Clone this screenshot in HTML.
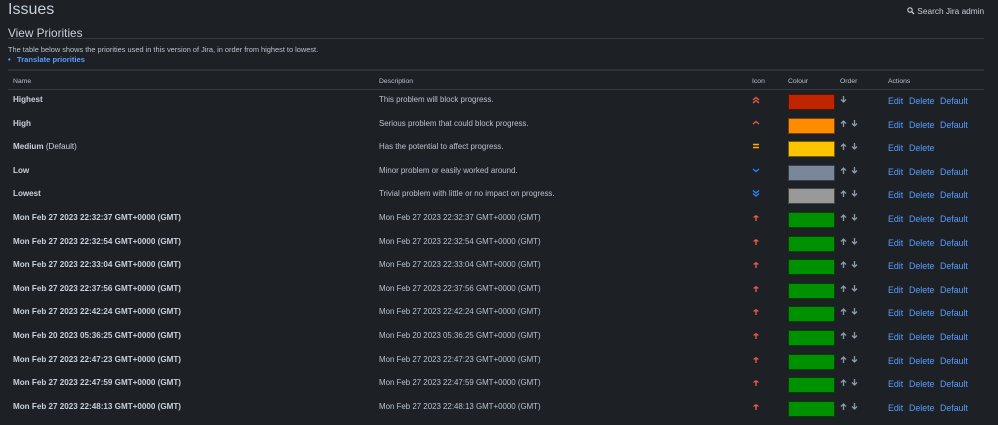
<!DOCTYPE html><html><head><style>
body{margin:0;width:998px;height:408px;overflow:hidden;background:#1d2125;font-family:"Liberation Sans",sans-serif;color:#b6c2cf;position:relative}
.a{position:absolute;white-space:nowrap}
.r{position:absolute;left:0;width:998px;height:23.6px;font-size:8px}
.r .n{position:absolute;left:13px;top:0;font-weight:bold;color:#c7d1db;font-size:8.1px}
.r .d{position:absolute;left:379px;top:0;font-size:7.9px}
.r .sw{position:absolute;left:788px;top:-1px;width:45px;height:14px;border:1px solid #0008}
.r svg{position:absolute}
.r .ac{position:absolute;left:888px;top:1px;color:#579dff;font-size:8.8px}
.r .ac span{position:absolute}
.line{position:absolute;left:8px;width:976px;height:1px;background:#333a41}
</style></head><body>
<svg width="0" height="0" style="position:absolute"><defs>
<g id="up"><path d="M3.5 7V1M1 3.5L3.5 1L6 3.5" stroke="#8c9bab" stroke-width="1.3" fill="none"/></g>
<g id="dn"><path d="M3.5 0V6M1 3.5L3.5 6L6 3.5" stroke="#8c9bab" stroke-width="1.3" fill="none"/></g>
<g id="hi"><path d="M1 4L4 1.5L7 4M1 7L4 4.5L7 7" stroke="#e5584a" stroke-width="1.4" fill="none"/></g>
<g id="h"><path d="M1 5L4 2.5L7 5" stroke="#e5584a" stroke-width="1.4" fill="none"/></g>
<g id="m"><path d="M1 2.5H7M1 5.5H7" stroke="#ffab00" stroke-width="1.4" fill="none"/></g>
<g id="l"><path d="M1 3L4 5.5L7 3" stroke="#2684ff" stroke-width="1.4" fill="none"/></g>
<g id="lo"><path d="M1 1.5L4 4L7 1.5M1 4.5L4 7L7 4.5" stroke="#2684ff" stroke-width="1.4" fill="none"/></g>
<g id="g"><path d="M1 4.5Q4 0 7 4.5Z" fill="#e5584a"/><path d="M4 3V8" stroke="#e5584a" stroke-width="1.4"/></g>
</defs></svg>
<div class="a" style="left:8px;top:1px;font-size:16px;color:#c7d1db">Issues</div>
<div class="a" style="left:907px;top:6px;font-size:8.3px;color:#c7d1db"><svg width="8" height="8" style="vertical-align:-1px"><circle cx="3" cy="3" r="2.2" stroke="#c7d1db" stroke-width="1.1" fill="none"/><path d="M4.6 4.6L7 7" stroke="#c7d1db" stroke-width="1.3"/></svg> Search Jira admin</div>
<div class="a" style="left:8px;top:26px;font-size:11.8px;color:#c7d1db">View Priorities</div>
<div class="line" style="top:38px"></div>
<div class="a" style="left:8px;top:45px;font-size:7.4px">The table below shows the priorities used in this version of Jira, in order from highest to lowest.</div>
<div class="a" style="left:8px;top:55px;font-size:7.6px;color:#579dff;font-weight:bold">•&nbsp;&nbsp; Translate priorities</div>
<div class="line" style="top:69px;background:#2c333a;height:2px"></div>
<div class="a" style="left:13px;top:78px;font-size:6.8px">Name</div>
<div class="a" style="left:379px;top:78px;font-size:6.8px">Description</div>
<div class="a" style="left:752px;top:78px;font-size:6.8px">Icon</div>
<div class="a" style="left:788px;top:78px;font-size:6.8px">Colour</div>
<div class="a" style="left:840px;top:78px;font-size:6.8px">Order</div>
<div class="a" style="left:888px;top:78px;font-size:6.8px">Actions</div>
<div class="line" style="top:89px"></div>

<div class="r" style="top:95px"><span class="n">Highest</span><span class="d">This problem will block progress.</span><svg style="left:752px;top:1px" width="8" height="8"><use href="#hi"/></svg><span class="sw" style="background:#bf2600"></span><svg style="left:840px;top:1px" width="8" height="8"><use href="#dn"/></svg><span class="ac"><span style="left:0">Edit</span><span style="left:21px">Delete</span><span style="left:52px">Default</span></span></div>
<div class="r" style="top:118.6px"><span class="n">High</span><span class="d">Serious problem that could block progress.</span><svg style="left:752px;top:0" width="8" height="8"><use href="#h"/></svg><span class="sw" style="background:#ff8b00"></span><svg style="left:840px;top:1px" width="8" height="8"><use href="#up"/></svg><svg style="left:851px;top:1px" width="8" height="8"><use href="#dn"/></svg><span class="ac"><span style="left:0">Edit</span><span style="left:21px">Delete</span><span style="left:52px">Default</span></span></div>
<div class="r" style="top:142.2px"><span class="n">Medium <span style="font-weight:normal">(Default)</span></span><span class="d">Has the potential to affect progress.</span><svg style="left:752px;top:0" width="8" height="8"><use href="#m"/></svg><span class="sw" style="background:#ffc400"></span><svg style="left:840px;top:1px" width="8" height="8"><use href="#up"/></svg><svg style="left:851px;top:1px" width="8" height="8"><use href="#dn"/></svg><span class="ac"><span style="left:0">Edit</span><span style="left:21px">Delete</span></span></div>
<div class="r" style="top:165.8px"><span class="n">Low</span><span class="d">Minor problem or easily worked around.</span><svg style="left:752px;top:0" width="8" height="8"><use href="#l"/></svg><span class="sw" style="background:#7a869a"></span><svg style="left:840px;top:1px" width="8" height="8"><use href="#up"/></svg><svg style="left:851px;top:1px" width="8" height="8"><use href="#dn"/></svg><span class="ac"><span style="left:0">Edit</span><span style="left:21px">Delete</span><span style="left:52px">Default</span></span></div>
<div class="r" style="top:189.4px"><span class="n">Lowest</span><span class="d">Trivial problem with little or no impact on progress.</span><svg style="left:752px;top:0" width="8" height="8"><use href="#lo"/></svg><span class="sw" style="background:#999"></span><svg style="left:840px;top:1px" width="8" height="8"><use href="#up"/></svg><svg style="left:851px;top:1px" width="8" height="8"><use href="#dn"/></svg><span class="ac"><span style="left:0">Edit</span><span style="left:21px">Delete</span><span style="left:52px">Default</span></span></div>
<div class="r" style="top:213px"><span class="n">Mon Feb 27 2023 22:32:37 GMT+0000 (GMT)</span><span class="d">Mon Feb 27 2023 22:32:37 GMT+0000 (GMT)</span><svg style="left:752px;top:0" width="8" height="8"><use href="#g"/></svg><span class="sw" style="background:#009100"></span><svg style="left:840px;top:1px" width="8" height="8"><use href="#up"/></svg><svg style="left:851px;top:1px" width="8" height="8"><use href="#dn"/></svg><span class="ac"><span style="left:0">Edit</span><span style="left:21px">Delete</span><span style="left:52px">Default</span></span></div>
<div class="r" style="top:236.6px"><span class="n">Mon Feb 27 2023 22:32:54 GMT+0000 (GMT)</span><span class="d">Mon Feb 27 2023 22:32:54 GMT+0000 (GMT)</span><svg style="left:752px;top:0" width="8" height="8"><use href="#g"/></svg><span class="sw" style="background:#009100"></span><svg style="left:840px;top:1px" width="8" height="8"><use href="#up"/></svg><svg style="left:851px;top:1px" width="8" height="8"><use href="#dn"/></svg><span class="ac"><span style="left:0">Edit</span><span style="left:21px">Delete</span><span style="left:52px">Default</span></span></div>
<div class="r" style="top:260.2px"><span class="n">Mon Feb 27 2023 22:33:04 GMT+0000 (GMT)</span><span class="d">Mon Feb 27 2023 22:33:04 GMT+0000 (GMT)</span><svg style="left:752px;top:0" width="8" height="8"><use href="#g"/></svg><span class="sw" style="background:#009100"></span><svg style="left:840px;top:1px" width="8" height="8"><use href="#up"/></svg><svg style="left:851px;top:1px" width="8" height="8"><use href="#dn"/></svg><span class="ac"><span style="left:0">Edit</span><span style="left:21px">Delete</span><span style="left:52px">Default</span></span></div>
<div class="r" style="top:283.8px"><span class="n">Mon Feb 27 2023 22:37:56 GMT+0000 (GMT)</span><span class="d">Mon Feb 27 2023 22:37:56 GMT+0000 (GMT)</span><svg style="left:752px;top:0" width="8" height="8"><use href="#g"/></svg><span class="sw" style="background:#009100"></span><svg style="left:840px;top:1px" width="8" height="8"><use href="#up"/></svg><svg style="left:851px;top:1px" width="8" height="8"><use href="#dn"/></svg><span class="ac"><span style="left:0">Edit</span><span style="left:21px">Delete</span><span style="left:52px">Default</span></span></div>
<div class="r" style="top:307.4px"><span class="n">Mon Feb 27 2023 22:42:24 GMT+0000 (GMT)</span><span class="d">Mon Feb 27 2023 22:42:24 GMT+0000 (GMT)</span><svg style="left:752px;top:0" width="8" height="8"><use href="#g"/></svg><span class="sw" style="background:#009100"></span><svg style="left:840px;top:1px" width="8" height="8"><use href="#up"/></svg><svg style="left:851px;top:1px" width="8" height="8"><use href="#dn"/></svg><span class="ac"><span style="left:0">Edit</span><span style="left:21px">Delete</span><span style="left:52px">Default</span></span></div>
<div class="r" style="top:331px"><span class="n">Mon Feb 20 2023 05:36:25 GMT+0000 (GMT)</span><span class="d">Mon Feb 20 2023 05:36:25 GMT+0000 (GMT)</span><svg style="left:752px;top:0" width="8" height="8"><use href="#g"/></svg><span class="sw" style="background:#009100"></span><svg style="left:840px;top:1px" width="8" height="8"><use href="#up"/></svg><svg style="left:851px;top:1px" width="8" height="8"><use href="#dn"/></svg><span class="ac"><span style="left:0">Edit</span><span style="left:21px">Delete</span><span style="left:52px">Default</span></span></div>
<div class="r" style="top:354.6px"><span class="n">Mon Feb 27 2023 22:47:23 GMT+0000 (GMT)</span><span class="d">Mon Feb 27 2023 22:47:23 GMT+0000 (GMT)</span><svg style="left:752px;top:0" width="8" height="8"><use href="#g"/></svg><span class="sw" style="background:#009100"></span><svg style="left:840px;top:1px" width="8" height="8"><use href="#up"/></svg><svg style="left:851px;top:1px" width="8" height="8"><use href="#dn"/></svg><span class="ac"><span style="left:0">Edit</span><span style="left:21px">Delete</span><span style="left:52px">Default</span></span></div>
<div class="r" style="top:378.2px"><span class="n">Mon Feb 27 2023 22:47:59 GMT+0000 (GMT)</span><span class="d">Mon Feb 27 2023 22:47:59 GMT+0000 (GMT)</span><svg style="left:752px;top:0" width="8" height="8"><use href="#g"/></svg><span class="sw" style="background:#009100"></span><svg style="left:840px;top:1px" width="8" height="8"><use href="#up"/></svg><svg style="left:851px;top:1px" width="8" height="8"><use href="#dn"/></svg><span class="ac"><span style="left:0">Edit</span><span style="left:21px">Delete</span><span style="left:52px">Default</span></span></div>
<div class="r" style="top:401.8px"><span class="n">Mon Feb 27 2023 22:48:13 GMT+0000 (GMT)</span><span class="d">Mon Feb 27 2023 22:48:13 GMT+0000 (GMT)</span><svg style="left:752px;top:0" width="8" height="8"><use href="#g"/></svg><span class="sw" style="background:#009100"></span><svg style="left:840px;top:1px" width="8" height="8"><use href="#up"/></svg><svg style="left:851px;top:1px" width="8" height="8"><use href="#dn"/></svg><span class="ac"><span style="left:0">Edit</span><span style="left:21px">Delete</span><span style="left:52px">Default</span></span></div>
</body></html>
